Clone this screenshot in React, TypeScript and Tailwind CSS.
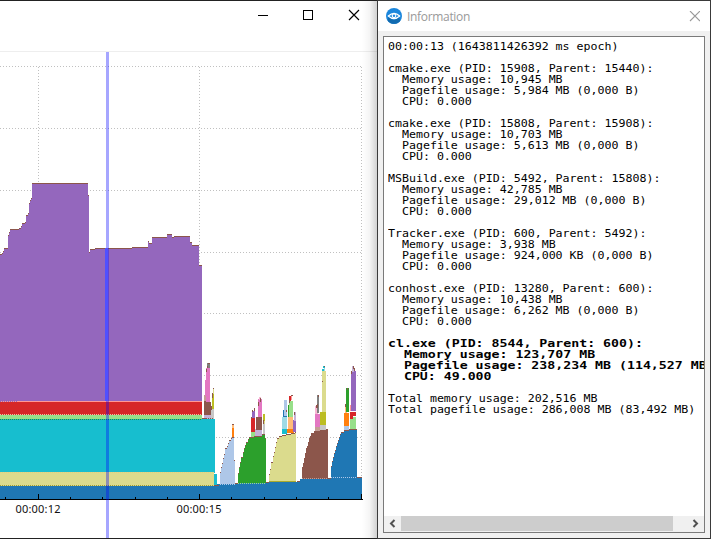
import React from "react";

type Box = [number, number, number, number, string];

const C = {
  blue: "#1f77b4", lblue: "#aec7e8", orange: "#ff7f0e", lorange: "#ffbb78", green: "#2ca02c",
  lgreen: "#98df8a", red: "#d62728", pinkish: "#ff9896", purple: "#9467bd", lpurple: "#c5b0d5",
  brown: "#8c564b", lbrown: "#c49c94", pink: "#e377c2", lpink: "#f7b6d2", gray: "#7f7f7f",
  lgray: "#c7c7c7", olive: "#bcbd22", tan: "#dbdb8d", cyan: "#17becf", lcyan: "#9edae5",
};

// left, top, right, bottom, colour
const boxes: Box[] = [
  [0, 401, 202, 402, C.pinkish], [0, 402, 202, 415, C.red], [0, 415, 202, 420, C.lgreen],
  [0, 419, 215, 473, C.cyan], [0, 472, 214, 486, C.tan], [0, 486, 217, 499, C.blue],
  [214, 474, 217, 485, C.cyan], [217, 484, 238, 499, C.blue], [238, 483, 269, 499, C.blue],
  [269, 482, 297, 499, C.blue], [297, 481, 300, 499, C.blue], [300, 479, 328, 499, C.blue],
  [328, 478, 331, 499, C.blue], [331, 477, 362, 499, C.blue],
  [204, 415, 211, 419, C.lpurple], [204, 402, 211, 415, C.brown], [204, 395, 206, 402, C.lbrown],
  [205, 380, 206, 396, C.pink],
  [206, 368, 210, 402, C.pink], [207, 363, 210, 368, C.gray], [211, 409, 214, 419, C.lgray],
  [212, 394, 214, 409, C.olive], [213, 388, 214, 394, C.tan],
  [232, 428, 234, 437, C.orange], [232, 425, 234, 428, C.lorange],
  [251, 432, 255, 437, C.lgreen], [255, 429, 262, 436, C.lpurple], [251, 418, 255, 432, C.red],
  [252, 411, 255, 418, C.purple], [256, 417, 262, 430, C.brown], [258, 399, 262, 417, C.pink],
  [259, 397, 261, 400, C.lpink], [263, 424, 265, 434, C.lgray], [263, 414, 265, 421, C.olive], [263, 421, 265, 424, C.tan],
  [282, 429, 287, 434, C.cyan], [282, 417, 287, 429, C.lcyan], [283, 410, 287, 417, C.blue],
  [284, 400, 287, 416, C.lblue], [288, 417, 293, 430, C.lorange], [287, 429, 294, 433, C.orange],
  [288, 405, 290, 417, C.green], [289, 401, 293, 417, C.lgreen], [289, 396, 291, 401, C.red],
  [291, 395, 292, 400, C.pinkish], [293, 420, 296, 432, C.purple], [294, 412, 296, 421, C.lpurple],
  [315, 426, 320, 432, C.lbrown], [315, 414, 320, 427, C.pink], [315, 406, 318, 414, C.lpink],
  [317, 395, 319, 413, C.gray], [320, 424, 326, 431, C.lgray], [320, 412, 326, 425, C.olive],
  [322, 371, 326, 412, C.tan], [322, 369, 324, 371, C.cyan], [323, 366, 325, 368, C.cyan], [324, 368, 325, 371, C.lcyan],
  [344, 425, 349, 430, C.lblue], [344, 413, 349, 426, C.orange], [345, 406, 347, 413, C.lorange],
  [346, 388, 349, 412, C.green], [350, 417, 356, 430, C.lgreen], [350, 412, 356, 416, C.red], [350, 416, 353, 419, C.red],
  [350, 405, 351, 411, C.pinkish], [351, 371, 356, 411, C.purple], [352, 366, 354, 372, C.lpurple],
];

const brownMarks: Box[] = [
  [208, 363, 210, 364, C.brown], [207, 366, 208, 368, C.brown], [206, 369, 207, 372, C.brown],
  [204, 401, 206, 403, C.brown], [212, 393, 213, 398, C.brown], [211, 406, 212, 410, C.brown], [213, 388, 214, 389, C.brown],
  [232, 424, 234, 425, C.brown], [254, 408, 255, 411, C.brown], [252, 410, 253, 412, C.brown],
  [260, 398, 261, 402, C.brown], [258, 402, 259, 406, C.brown], [251, 417, 252, 419, C.brown],
  [263, 420, 264, 424, C.brown], [286, 410, 287, 412, C.brown], [291, 395, 293, 396, C.brown],
  [289, 400, 290, 403, C.brown], [294, 412, 295, 415, C.brown], [317, 404, 318, 408, C.brown],
  [316, 405, 317, 408, C.brown], [318, 395, 319, 397, C.brown], [322, 381, 323, 382, C.brown],
  [324, 366, 325, 367, C.brown], [347, 388, 348, 390, C.brown], [345, 404, 346, 407, C.brown],
  [353, 366, 354, 369, C.brown], [354, 368, 355, 371, C.brown], [351, 371, 352, 374, C.brown],
  [202, 418, 206, 419, C.brown], [214, 485, 219, 486, C.brown], [235, 483, 238, 484, C.brown],
  [266, 482, 269, 483, C.brown],
  [297, 481, 300, 482, C.brown], [328, 478, 331, 479, C.brown], [357, 477, 362, 478, C.brown],
];

const processRidge =
  "0,254 2,254 2,253 3,253 3,251 4,251 4,248 8,248 8,235 9,235 9,232 10,232 10,229 19,229 19,228 21,228 21,226 22,226 22,223 25,223 25,222 26,222 26,215 28,215 28,213 29,213 29,203 30,203 30,200 31,200 31,198 32,198 32,183 88,183 88,195 89,195 89,252 90,252 90,249 95,249 95,248 132,248 132,247 148,247 148,241 149,241 149,243 152,243 152,237 167,237 167,234 172,234 172,237 174,237 174,236 190,236 190,242 192,242 192,245 199,245 199,265 202,265";

const humps: [string, string][] = [
  ["220,484 220,472 221,472 221,467 222,467 222,463 223,463 223,458 224,458 224,454 225,454 225,448 227,448 227,446 228,446 228,443 229,443 229,440 231,440 231,438 232,438 232,437 234,437 234,460 235,460 235,484", C.lblue],
  ["238,483 238,473 239,473 239,467 240,467 240,462 241,462 241,457 243,457 243,452 244,452 244,448 245,448 245,445 246,445 246,442 248,442 248,439 249,439 249,437 254,437 254,436 262,436 262,434 265,434 265,438 266,438 266,483", C.green],
  ["269,482 269,474 270,474 270,469 271,469 271,462 273,462 273,456 274,456 274,452 275,452 275,447 276,447 276,442 277,442 277,438 279,438 279,436 282,436 282,435 286,435 286,434 291,434 291,433 295,433 295,432 296,432 296,482", C.tan],
  ["302,479 302,467 303,467 303,463 304,463 304,458 305,458 305,453 306,453 306,448 307,448 307,446 308,446 308,442 309,442 309,438 310,438 310,436 311,436 311,433 314,433 314,431 320,431 320,430 326,430 326,429 328,429 328,479", C.brown],
  ["331,477 331,466 332,466 332,461 333,461 333,457 334,457 334,453 335,453 335,450 336,450 336,446 337,446 337,443 338,443 338,440 339,440 339,437 340,437 340,434 341,434 341,432 344,432 344,430 349,430 349,429 357,429 357,477", C.blue],
];

const seams: [number, number, number, string][] = [
  [0, 18, 401.5, C.purple], [0, 202, 414.5, "#f4c0a0"], [0, 202, 419.5, "#258c35"], [0, 214, 472.5, "#e5cf7e"],
  [0, 214, 485.5, "#9f9d32"], [220, 235, 484.5, C.lblue], [238, 266, 483.5, C.lgreen],
  [302, 328, 478.5, C.lbrown], [331, 357, 477.5, C.lblue],
  [206, 214, 418.5, C.brown],
];

// One-pixel caps on the flat parts of a stepped outline
function capsOf(points: string) {
  const p = points.split(" ").map((s) => s.split(",").map(Number));
  return p.slice(1).map(([x, y], i) => (p[i][1] === y ? `M${p[i][0]} ${y + 0.5}H${x}` : "")).join("");
}

function Rects({ items }: { items: Box[] }) {
  return (
    <>
      {items.map(([l, t, r, b, c], i) => (
        <rect key={i} x={l} y={t} width={r - l} height={b - t} fill={c} />
      ))}
    </>
  );
}

function UsageChart() {
  return (
    <svg className="block h-[486px] w-[377px]" viewBox="0 52 377 486" shapeRendering="crispEdges">
      <g stroke="#c0c0c0" strokeDasharray="1 2">
        {[66.5, 128.5, 190.5, 252.5, 313.5, 375.5, 437.5].map((y) => <path key={y} d={`M0 ${y}H361`} />)}
        {[38.5, 199.5, 361.5].map((x) => <path key={x} d={`M${x} 67V499`} />)}
      </g>
      <polygon points={`0,401 ${processRidge} 202,401`} fill={C.purple} />
      <path d={capsOf(processRidge)} stroke={C.brown} />
      <Rects items={boxes} />
      {humps.map(([points, color], i) => (
        <g key={i}>
          <polygon points={points} fill={color} />
          <path d={capsOf(points)} stroke={C.brown} />
        </g>
      ))}
      <Rects items={brownMarks} />
      <rect x="269" y="481" width="27" height="1" fill="#a9a92c" />
      {seams.map(([a, b, y, c], i) => <path key={i} d={`M${a} ${y}H${b}`} stroke={c} strokeDasharray="1 1" />)}
      <rect x="0" y="499" width="363" height="1" fill="#000" />
      {[38, 199, 361].map((x) => <rect key={x} x={x} y="494" width="1" height="5" />)}
      {[5, 70, 102, 135, 167, 231, 264, 296, 328].map((x) => <rect key={x} x={x} y="497" width="1" height="2" />)}
      <g fontFamily="'Noto Sans', sans-serif" fontSize="11" fill="#111">
        <text x="15.5" y="513" textLength="45">00:00:12</text>
        <text x="176.5" y="513" textLength="45">00:00:15</text>
      </g>
      <rect x="106" y="52" width="3" height="486" fill="#0000ff" fillOpacity=".35" />
      <rect x="105" y="248" width="3" height="153" fill="#5050ff" />
    </svg>
  );
}

const processes = `00:00:13 (1643811426392 ms epoch)

cmake.exe (PID: 15908, Parent: 15440):
  Memory usage: 10,945 MB
  Pagefile usage: 5,984 MB (0,000 B)
  CPU: 0.000

cmake.exe (PID: 15808, Parent: 15908):
  Memory usage: 10,703 MB
  Pagefile usage: 5,613 MB (0,000 B)
  CPU: 0.000

MSBuild.exe (PID: 5492, Parent: 15808):
  Memory usage: 42,785 MB
  Pagefile usage: 29,012 MB (0,000 B)
  CPU: 0.000

Tracker.exe (PID: 600, Parent: 5492):
  Memory usage: 3,938 MB
  Pagefile usage: 924,000 KB (0,000 B)
  CPU: 0.000

conhost.exe (PID: 13280, Parent: 600):
  Memory usage: 10,438 MB
  Pagefile usage: 6,262 MB (0,000 B)
  CPU: 0.000
`;

const selected = `cl.exe (PID: 8544, Parent: 600):
  Memory usage: 123,707 MB
  Pagefile usage: 238,234 MB (114,527 MB
  CPU: 49.000`;

const totals = `Total memory usage: 202,516 MB
Total pagefile usage: 286,008 MB (83,492 MB)`;

const mono = "origin-top-left whitespace-pre font-['DejaVu_Sans_Mono',monospace] leading-[11px] text-black";

function MainWindow() {
  return (
    <section className="relative h-[539px] w-[377px] shrink-0 overflow-hidden border-y border-[#222] bg-white">
      <header className="flex h-[51px] items-start justify-end border-b border-[#eee] pr-[17px] pt-[8px]">
        <svg className="h-[13px] w-[104px]" viewBox="0 0 104 13" shapeRendering="crispEdges" fill="none" stroke="#000">
          <path d="M2 6.5H12M47.5 1.5H56.5V10.5H47.5Z" />
          <path d="M93 1L103 11M103 1L93 11" shapeRendering="auto" strokeWidth="1.15" />
        </svg>
      </header>
      <UsageChart />
      <div className="absolute inset-y-0 right-0 w-[15px] bg-linear-to-r from-transparent via-black/4 to-black/18" />
    </section>
  );
}

function InformationWindow() {
  return (
    <section className="flex h-[539px] w-[334px] shrink-0 flex-col border border-[#3a3a3a] bg-[#f0f0f0]">
      <header className="flex h-[30px] shrink-0 items-center bg-white pl-[8px] pr-[10px]">
        <svg className="size-[16px] shrink-0" viewBox="0 0 16 16">
          <circle cx="8" cy="8" r="8" fill="#1b86dc" />
          <path d="M2.5 9L8 12L13 9.5L14.5 12.5A8 8 0 0 1 1.5 12.5Z" fill="#126bb0" />
          <path d="M2.3 8Q8 2.6 13.7 8Q8 13.2 2.3 8Z" fill="none" stroke="#fff" strokeWidth="1.1" />
          <circle cx="8" cy="7.8" r="1.8" fill="none" stroke="#fff" strokeWidth="1.1" />
        </svg>
        <h1 className="ml-[5px] flex-1 pt-px font-['Open_Sans',sans-serif] text-[12px] leading-4 tracking-[-0.32px] text-[#999]">Information</h1>
        <svg className="h-[11px] w-[11px] shrink-0" viewBox="0 0 11 11" stroke="#999" strokeWidth="1.1"><path d="M1 0L11 10M11 0L1 10" /></svg>
      </header>
      <main className="ml-[5px] mt-[5px] flex h-[497px] w-[322px] flex-col border border-[#7a7a7a] bg-white">
        <div className="flex-1 overflow-hidden pl-[4px] pt-[4px]">
          <pre className={`${mono} w-[270px] scale-x-[1.16] text-[10px]`}>{processes}</pre>
          <pre className={`${mono} mt-[11px] w-[250px] scale-x-[1.26] text-[10.5px] font-bold`}>{selected}</pre>
          <pre className={`${mono} mt-[11px] w-[270px] scale-x-[1.16] text-[10px]`}>{totals}</pre>
        </div>
        <div className="flex h-[16px] shrink-0 items-start bg-[#f0f0f0]">
          <svg className="h-[15px] w-[17px]" viewBox="0 0 17 15" fill="none" stroke="#505050" strokeWidth="2"><path d="M10.5 4L7 7.5L10.5 11" /></svg>
          <div className="h-[15px] w-[272px] bg-[#cdcdcd]" />
          <div className="flex-1" />
          <svg className="h-[15px] w-[17px]" viewBox="0 0 17 15" fill="none" stroke="#505050" strokeWidth="2"><path d="M6.5 4L10 7.5L6.5 11" /></svg>
        </div>
      </main>
    </section>
  );
}

export default function App() {
  return (
    <div className="flex h-[539px] w-[711px] overflow-hidden bg-white">
      <MainWindow />
      <InformationWindow />
    </div>
  );
}
